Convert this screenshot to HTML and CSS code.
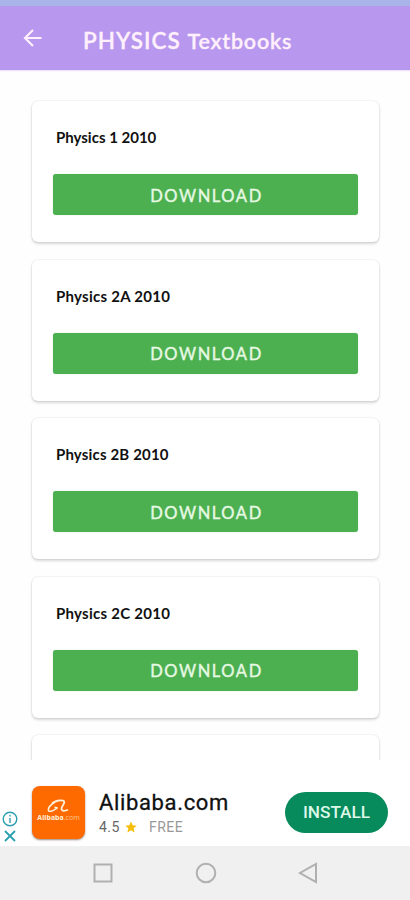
FILE: index.html
```html
<!DOCTYPE html>
<html lang="en">
<head>
<meta charset="utf-8">
<title>PHYSICS Textbooks</title>
<link rel="stylesheet" href="styles.css">
</head>
<body>
<div class="status"></div>
<header class="appbar">
  <svg class="back" viewBox="0 0 20 20"><path d="M18.500 10H2M10 2 2 10l8 8"/></svg>
  <h1><span class="upper">PHYSICS </span><span class="lower">Textbooks</span></h1>
</header>
<main class="list">
  <article class="card"><h2>Physics 1 2010</h2><button>DOWNLOAD</button></article>
  <article class="card"><h2 class="wide">Physics 2A 2010</h2><button>DOWNLOAD</button></article>
  <article class="card"><h2 class="mid">Physics 2B 2010</h2><button>DOWNLOAD</button></article>
  <article class="card"><h2 class="wide">Physics 2C 2010</h2><button>DOWNLOAD</button></article>
  <article class="card"></article>
</main>
<section class="ad">
  <div class="choices">
    <svg viewBox="0 0 16 16"><circle cx="8" cy="8" r="6.800"/><path d="M8 7v5M8 3.800v1.600"/></svg>
    <svg class="close" viewBox="0 0 16 16"><path d="m3 3 10 10M13 3 3 13"/></svg>
  </div>
  <div class="logo">
    <svg viewBox="0 0 25 15"><path d="M6 4.500C9 1.800 14 .8 17 1.700c3 1-.2 4.300-1.200 6.800-1.200 3.200 1.700 4.300 6.200 2.300"/><path class="thin" d="M9 3C5 5.500 2.300 9 2.300 11c0 2.500 5 1.200 8.200-1.700M8.500 8.300l2.500.6-.5 1.300"/></svg>
    <p><b>Alibaba</b><span>.com</span></p>
  </div>
  <div class="info">
    <h3>Alibaba.com</h3>
    <p><span class="rate">4.5</span><svg viewBox="0 0 24 24"><path d="m12 1 3.300 7.500 8.200.8-6.200 5.400 1.900 8.100L12 18.500l-7.200 4.300 1.900-8.100L.5 9.300l8.200-.8z"/></svg><span class="free">FREE</span></p>
  </div>
  <a class="install">INSTALL</a>
</section>
<nav class="nav">
  <svg viewBox="0 0 24 24"><path d="M3.500 3.500h17v17h-17z"/></svg>
  <svg viewBox="0 0 24 24"><circle cx="12" cy="12" r="9.300"/></svg>
  <svg viewBox="0 0 24 24"><path d="M20 3v18L4 12z"/></svg>
</nav>
</body>
</html>
```
FILE: styles.css
```css
* { box-sizing: border-box; margin: 0; padding: 0; }
body {
  width: 410px; height: 900px; overflow: hidden;
  display: flex; flex-direction: column;
  background: #fefefe; font-family: Lato, sans-serif;
}
svg { display: block; fill: none; }
.status { height: 6px; background: #a9b5e8; flex: none; }
.appbar {
  height: 64px; flex: none; display: flex; align-items: center;
  padding-left: 23px; background: #b798ee; box-shadow: 0 1px 1px #f0e2f6;
}
.back { width: 20px; height: 20px; stroke: #fff0fc; stroke-width: 2.200; }
h1 {
  margin-left: 40px; padding-top: 5px; white-space: pre; color: #fff0fc;
  font-size: 22.500px; line-height: 30px; font-weight: 600;
  -webkit-text-stroke: .3px #fff0fc;
}
.upper { letter-spacing: 1px; }
.lower { font-size: 21.500px; letter-spacing: .8px; }
.list {
  height: 690px; flex: none; overflow: hidden;
  padding: 31px 31px 0 32px; display: flex; flex-direction: column; gap: 17.600px;
}
.card {
  height: 141px; flex: none; padding: 26px 21px 0; border-radius: 6px;
  background: #fff; box-shadow: 0 0 2px rgba(0,0,0,.14), 0 2px 3px rgba(0,0,0,.15);
}
h2 {
  height: 20px; margin-left: 3px; white-space: nowrap;
  font-size: 15px; line-height: 20px; font-weight: 700; color: #111;
}
.mid { letter-spacing: .17px; }
.wide { letter-spacing: .27px; }
button {
  display: block; width: 305px; height: 41px; margin-top: 27px; padding: 2px 0 0 2px;
  border: 0; border-radius: 3px; background: #4caf50; color: #e6f9e2;
  font: 400 16.500px/38px Lato, sans-serif; letter-spacing: 1.600px;
  -webkit-text-stroke: .4px #e6f9e2;
  box-shadow: 0 0 1px #8ccc8e;
}
.ad { height: 86px; flex: none; display: flex; background: #fff; }
.choices { width: 20px; margin-left: 2px; padding-top: 51px; flex: none; }
.choices svg { width: 16px; height: 16px; stroke: #2b9faf; stroke-width: 1.400; }
.choices .close { margin-top: 1px; stroke-width: 1.800; }
.logo {
  width: 53px; height: 53px; margin: 26px 0 0 10px; flex: none; border-radius: 8px;
  background: #ff6a00; box-shadow: 0 1px 2px rgba(90,60,40,.6); color: #fff0dc;
}
.logo svg { width: 25px; height: 15px; margin: 13px 0 0 14px; stroke: #fff0dc; stroke-width: 1.800; }
.logo .thin { stroke-width: 1.500; }
.logo p { font: 7px/8px "Open Sans", sans-serif; text-align: center; white-space: nowrap; }
.logo span { opacity: .65; }
.info { width: 186px; margin-left: 14px; padding-top: 29px; flex: none; }
h3 { font: 400 22px/28px Roboto, sans-serif; letter-spacing: .65px; color: #111; -webkit-text-stroke: .3px #111; }
.info p { display: flex; align-items: center; font: 14px/20px Roboto, sans-serif; letter-spacing: .5px; }
.rate { width: 25px; color: #666; }
.info svg { width: 12px; height: 12px; margin-left: 1px; fill: #f5be0b; }
.free { margin-left: 12px; color: #999; letter-spacing: .5px; }
.install {
  width: 103px; height: 41px; margin-top: 32px; border-radius: 21px; flex: none;
  background: #078a5c; color: #dcf8e9; text-align: center;
  font: 500 17.200px/41px Roboto, sans-serif;
}
.nav { height: 54px; flex: none; background: #f0f0f0; display: flex; padding: 15px 0 0 91px; gap: 78.500px; }
.nav svg { width: 24px; height: 24px; stroke: #b0b0b0; stroke-width: 2; flex: none; }
```
